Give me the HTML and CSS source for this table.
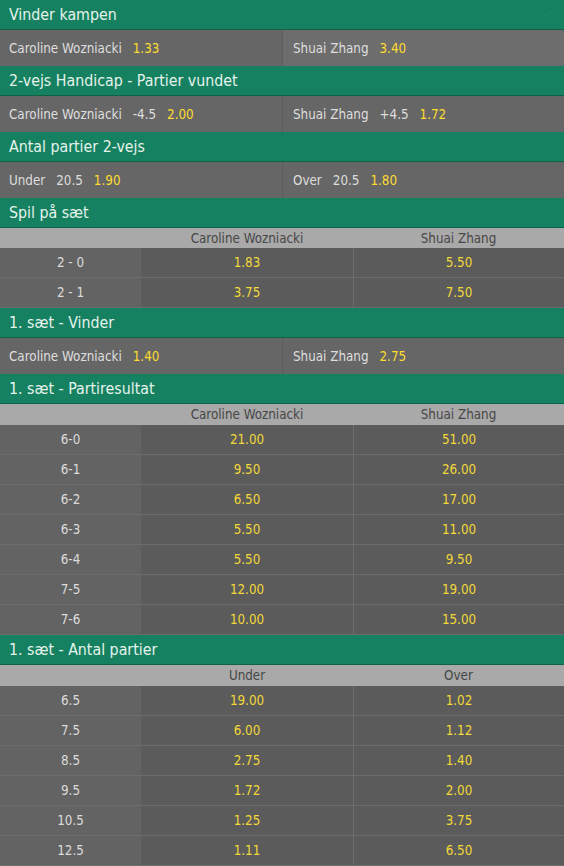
FILE: index.html
```html
<!DOCTYPE html>
<html lang="da">
<head>
<meta charset="utf-8">
<title>Odds</title>
<link rel="stylesheet" href="styles.css">
</head>
<body>
<div class="market">
  <div class="mhead"><span>Vinder kampen</span><span class="chev"></span></div>
  <div class="pair">
    <div class="cell"><span class="nm">Caroline Wozniacki</span><span class="odd">1.33</span></div>
    <div class="cell hl"><span class="nm">Shuai Zhang</span><span class="odd">3.40</span></div>
  </div>
</div>
<div class="market">
  <div class="mhead"><span>2-vejs Handicap - Partier vundet</span></div>
  <div class="pair">
    <div class="cell"><span class="nm">Caroline Wozniacki</span><span class="hc">-4.5</span><span class="odd">2.00</span></div>
    <div class="cell"><span class="nm">Shuai Zhang</span><span class="hc">+4.5</span><span class="odd">1.72</span></div>
  </div>
</div>
<div class="market">
  <div class="mhead"><span>Antal partier 2-vejs</span></div>
  <div class="pair">
    <div class="cell"><span class="nm">Under</span><span class="hc">20.5</span><span class="odd">1.90</span></div>
    <div class="cell"><span class="nm">Over</span><span class="hc">20.5</span><span class="odd">1.80</span></div>
  </div>
</div>
<div class="market">
  <div class="mhead"><span>Spil på sæt</span></div>
  <div class="grid short">
    <div class="th"></div><div class="th">Caroline Wozniacki</div><div class="th">Shuai Zhang</div>
    <div class="lb">2 - 0</div><div class="od">1.83</div><div class="od r">5.50</div>
    <div class="lb">2 - 1</div><div class="od">3.75</div><div class="od r">7.50</div>
  </div>
</div>
<div class="market">
  <div class="mhead"><span>1. sæt - Vinder</span></div>
  <div class="pair">
    <div class="cell"><span class="nm">Caroline Wozniacki</span><span class="odd">1.40</span></div>
    <div class="cell"><span class="nm">Shuai Zhang</span><span class="odd">2.75</span></div>
  </div>
</div>
<div class="market">
  <div class="mhead"><span>1. sæt - Partiresultat</span></div>
  <div class="grid">
    <div class="th"></div><div class="th">Caroline Wozniacki</div><div class="th">Shuai Zhang</div>
    <div class="lb">6-0</div><div class="od">21.00</div><div class="od r">51.00</div>
    <div class="lb">6-1</div><div class="od">9.50</div><div class="od r">26.00</div>
    <div class="lb">6-2</div><div class="od">6.50</div><div class="od r">17.00</div>
    <div class="lb">6-3</div><div class="od">5.50</div><div class="od r">11.00</div>
    <div class="lb">6-4</div><div class="od">5.50</div><div class="od r">9.50</div>
    <div class="lb">7-5</div><div class="od">12.00</div><div class="od r">19.00</div>
    <div class="lb">7-6</div><div class="od">10.00</div><div class="od r">15.00</div>
  </div>
</div>
<div class="market">
  <div class="mhead"><span>1. sæt - Antal partier</span></div>
  <div class="grid">
    <div class="th"></div><div class="th">Under</div><div class="th">Over</div>
    <div class="lb">6.5</div><div class="od">19.00</div><div class="od r">1.02</div>
    <div class="lb">7.5</div><div class="od">6.00</div><div class="od r">1.12</div>
    <div class="lb">8.5</div><div class="od">2.75</div><div class="od r">1.40</div>
    <div class="lb">9.5</div><div class="od">1.72</div><div class="od r">2.00</div>
    <div class="lb">10.5</div><div class="od">1.25</div><div class="od r">3.75</div>
    <div class="lb">12.5</div><div class="od">1.11</div><div class="od r">6.50</div>
  </div>
</div>
</body>
</html>
```

FILE: styles.css
```css
html, body {
  margin: 0;
  padding: 0;
  background: #5d5d5d;
}
body {
  width: 564px;
  font-family: "DejaVu Sans Condensed", "DejaVu Sans", sans-serif;
  font-size: 13.3px;
  color: #dcdcdc;
}
.mhead {
  height: 29px;
  border-bottom: 1px solid #0f6246;
  background: #158160;
  color: #e6f3ec;
  font-size: 15.8px;
  display: flex;
  align-items: center;
  justify-content: space-between;
  padding: 0 10px 0 9px;
}
.chev {
  width: 6px;
  height: 6px;
  border-right: 1px solid #1c8a68;
  border-bottom: 1px solid #1c8a68;
  transform: rotate(45deg);
  margin-right: 4px;
  margin-top: -4px;
}
.pair {
  display: grid;
  grid-template-columns: 282px 282px;
  height: 36px;
}
.cell {
  display: flex;
  align-items: center;
  gap: 11px;
  padding-left: 9px;
  background: #666666;
}
.cell + .cell {
  padding-left: 10px;
  border-left: 1px solid #5c5c5c;
}
.cell.hl {
  background: #6d6d6d;
}
.nm, .hc {
  color: #dedede;
}
.odd {
  color: #ffdc2e;
}
.grid {
  display: grid;
  grid-template-columns: 141px 212px 211px;
  grid-template-rows: 21px;
  grid-auto-rows: 30px;
}
.grid.short {
  grid-template-rows: 20px;
}
.grid .th {
  background: #a9a9a9;
  color: #474747;
  display: flex;
  align-items: center;
  justify-content: center;
}
.lb, .od {
  display: flex;
  align-items: center;
  justify-content: center;
  border-bottom: 1px solid #6c6c6c;
}
.lb {
  background: #636363;
  color: #dcdcdc;
}
.od {
  background: #5b5b5b;
  color: #f2d838;
}
.od.r {
  border-left: 1px solid #6c6c6c;
}
```
